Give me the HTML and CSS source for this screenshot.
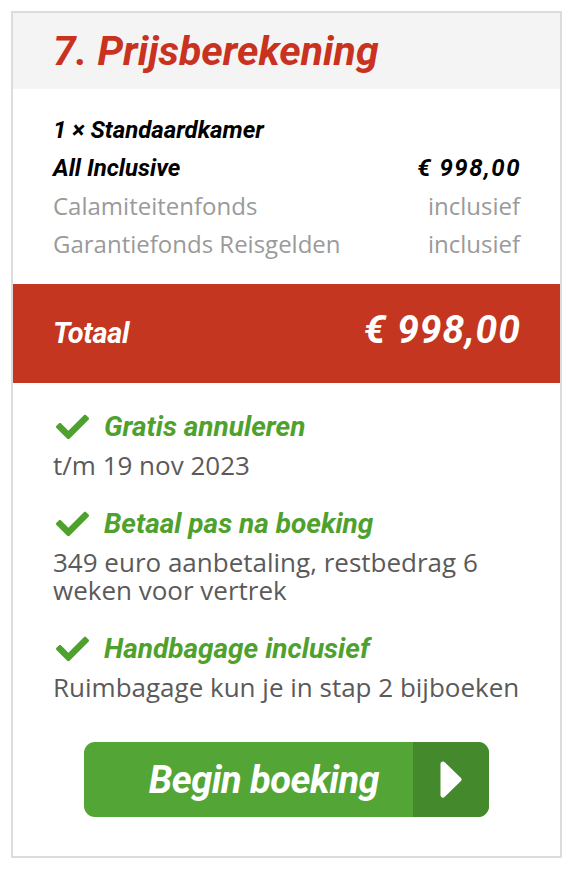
FILE: index.html
```html
<!DOCTYPE html>
<html lang="nl">
<head>
  <meta charset="UTF-8" />
  <title>Prijsberekening</title>
  <link rel="stylesheet" href="styles.css">
</head>
<body>

  <div class="price-box">
    <div class="price-head">
      <h2>7. Prijsberekening</h2>
    </div>

    <div class="price-lines">
      <div class="line strong">
        <span>1 × Standaardkamer</span>
      </div>
      <div class="line strong">
        <span>All Inclusive</span>
        <span class="amount">€ 998,00</span>
      </div>
      <div class="line muted">
        <span>Calamiteitenfonds</span>
        <span>inclusief</span>
      </div>
      <div class="line muted">
        <span>Garantiefonds Reisgelden</span>
        <span>inclusief</span>
      </div>
    </div>

    <div class="total">
      <span class="total-label">Totaal</span>
      <span class="total-amount">€ 998,00</span>
    </div>

    <div class="perks">
      <div class="perk">
        <div class="perk-title">
          <svg class="check" viewBox="0 64 512 384"><path d="M173.9 439.4l-166.4-166.4c-10-10-10-26.2 0-36.2l36.2-36.2c10-10 26.2-10 36.2 0L192 312.7 432.1 72.6c10-10 26.2-10 36.2 0l36.2 36.2c10 10 10 26.2 0 36.2l-294.4 294.4c-10 10-26.2 10-36.2 0z"/></svg>
          <span>Gratis annuleren</span>
        </div>
        <p>t/m 19 nov 2023</p>
      </div>
      <div class="perk">
        <div class="perk-title">
          <svg class="check" viewBox="0 64 512 384"><path d="M173.9 439.4l-166.4-166.4c-10-10-10-26.2 0-36.2l36.2-36.2c10-10 26.2-10 36.2 0L192 312.7 432.1 72.6c10-10 26.2-10 36.2 0l36.2 36.2c10 10 10 26.2 0 36.2l-294.4 294.4c-10 10-26.2 10-36.2 0z"/></svg>
          <span>Betaal pas na boeking</span>
        </div>
        <p>349 euro aanbetaling, restbedrag 6 weken voor vertrek</p>
      </div>
      <div class="perk">
        <div class="perk-title">
          <svg class="check" viewBox="0 64 512 384"><path d="M173.9 439.4l-166.4-166.4c-10-10-10-26.2 0-36.2l36.2-36.2c10-10 26.2-10 36.2 0L192 312.7 432.1 72.6c10-10 26.2-10 36.2 0l36.2 36.2c10 10 10 26.2 0 36.2l-294.4 294.4c-10 10-26.2 10-36.2 0z"/></svg>
          <span>Handbagage inclusief</span>
        </div>
        <p>Ruimbagage kun je in stap 2 bijboeken</p>
      </div>

      <button class="book-btn" type="button">
        <span class="book-text">Begin boeking</span>
        <span class="book-arrow">
          <svg viewBox="0 0 22 37"><path d="M3 3 L19 18.5 L3 34 Z"/></svg>
        </span>
      </button>
    </div>
  </div>

</body>
</html>
```

FILE: styles.css
```css
* {
  box-sizing: border-box;
}

body {
  margin: 0;
  padding: 11px 0 0 11px;
  font-family: 'Open Sans', sans-serif;
  background: #fff;
}

.price-box {
  width: 551px;
  border: 2px solid #dcdcdc;
  background: #fff;
}

/* header */
.price-head {
  background: #f4f4f4;
  height: 76px;
  padding: 1px 40px 0;
}

.price-head h2 {
  margin: 0;
  font-family: Roboto, sans-serif;
  font-style: italic;
  font-weight: 700;
  font-size: 41px;
  line-height: 75px;
  color: #c9321f;
}

/* price lines */
.price-lines {
  padding: 22px 40px 21px;
}

.line {
  display: flex;
  justify-content: space-between;
  line-height: 38px;
}

.line.strong {
  font-family: Roboto, sans-serif;
  font-style: italic;
  font-weight: 700;
  font-size: 24px;
  color: #000;
}

.line .amount {
  letter-spacing: 1.5px;
  margin-right: -1px;
}

.line.muted {
  font-size: 24px;
  color: #9a9a9a;
}

/* total bar */
.total {
  background: #c4361f;
  color: #fff;
  height: 99px;
  padding: 28px 40px 0;
  display: flex;
  justify-content: space-between;
  align-items: baseline;
  font-family: Roboto, sans-serif;
  font-style: italic;
  font-weight: 700;
}

.total-label {
  font-size: 29px;
  line-height: 37px;
  letter-spacing: -0.3px;
}

.total-amount {
  font-size: 39px;
  line-height: 37px;
  letter-spacing: 1px;
  margin-right: -1px;
}

/* perks */
.perks {
  padding: 27px 40px 39px;
}

.perk + .perk {
  margin-top: 28px;
}

.perk-title {
  display: flex;
  align-items: center;
  gap: 15px;
  font-family: Roboto, sans-serif;
  font-style: italic;
  font-weight: 700;
  font-size: 28px;
  line-height: 34px;
  color: #4fa12e;
}

.check {
  width: 36px;
  height: 26px;
  padding-left: 3px;
  fill: #4fa12e;
  flex-shrink: 0;
}

.perk p {
  margin: 7px 0 0;
  font-size: 26px;
  line-height: 28px;
  color: #5a5a5a;
}

/* button */
.book-btn {
  display: flex;
  width: 405px;
  height: 75px;
  margin: 41px auto 0;
  padding: 0;
  border: none;
  border-radius: 11px;
  overflow: hidden;
  background: #53a535;
  cursor: pointer;
}

.book-text {
  flex: 1;
  padding-left: 31px;
  display: flex;
  align-items: center;
  justify-content: center;
  font-family: Roboto, sans-serif;
  font-style: italic;
  font-weight: 700;
  font-size: 38px;
  color: #fff;
  letter-spacing: -0.5px;
}

.book-arrow {
  width: 76px;
  background: #448a2c;
  display: flex;
  align-items: center;
  justify-content: center;
}

.book-arrow svg {
  width: 22px;
  height: 37px;
  fill: #fff;
  stroke: #fff;
  stroke-width: 5;
  stroke-linejoin: round;
}
```
